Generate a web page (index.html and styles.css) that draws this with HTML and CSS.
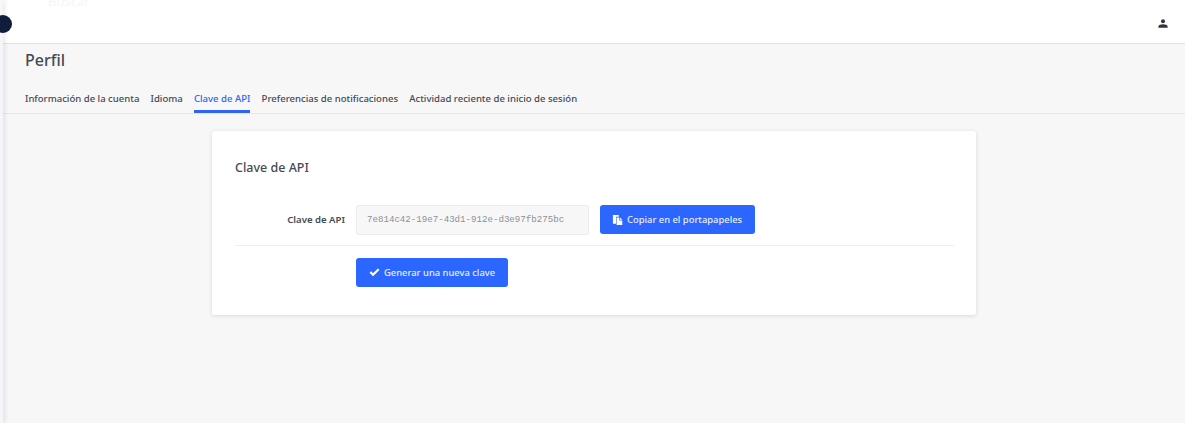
FILE: index.html
```html
<!DOCTYPE html>
<html lang="es">
<head>
<meta charset="utf-8">
<title>Perfil</title>
<link rel="stylesheet" href="styles.css">
</head>
<body>
<aside class="rail">
  <span class="rail-toggle"></span>
</aside>
<div class="main">
  <header class="topbar">
    <span class="search">Buscar</span>
    <svg class="user-icon" viewBox="0 0 10 9" width="10" height="9" aria-hidden="true"><circle cx="5" cy="2.3" r="2"/><path d="M0.4 8.8V7.4C0.4 6 2.8 5.3 5 5.3S9.6 6 9.6 7.4V8.8Z"/></svg>
  </header>
  <div class="page-head">
    <h1 class="page-title">Perfil</h1>
    <nav class="tabs">
      <a class="tab">Información de la cuenta</a>
      <a class="tab">Idioma</a>
      <a class="tab tab-active">Clave de API</a>
      <a class="tab">Preferencias de notificaciones</a>
      <a class="tab">Actividad reciente de inicio de sesión</a>
    </nav>
  </div>
  <section class="card">
    <h2 class="card-title">Clave de API</h2>
    <div class="form-row">
      <label class="form-label">Clave de API</label>
      <div class="key-input">7e814c42-19e7-43d1-912e-d3e97fb275bc</div>
      <button class="btn btn-copy">
        <svg class="btn-icon" viewBox="0 0 12 12" width="11" height="11" aria-hidden="true"><path d="M1 1H7.5V3H4.4V10.5H1Z"/><path d="M5 3.7H8V7H11.2V12H5Z"/><path d="M8.8 3.7L11.2 6.2H8.8Z"/></svg>
        Copiar en el portapapeles
      </button>
    </div>
    <div class="form-actions">
      <button class="btn">
        <svg class="btn-icon" viewBox="0 0 12 10" width="11" height="9" aria-hidden="true"><path d="M0.5 5.4L2.2 3.7L4.4 5.9L9.8 0.5L11.5 2.2L4.4 9.3Z"/></svg>
        Generar una nueva clave
      </button>
    </div>
  </section>
</div>
<div class="edge"></div>
</body>
</html>
```
FILE: styles.css
```css
* { box-sizing: border-box; }
html, body { margin: 0; height: 100%; }
body {
  display: flex;
  height: 423px;
  overflow: hidden;
  background: #f7f7f8;
  font-family: "Noto Sans", "Open Sans", sans-serif;
  color: #454a52;
}
.rail {
  position: relative;
  flex: 0 0 3px;
  background: #f6f6f9;
  box-shadow: 1px 0 5px rgba(50, 50, 100, 0.18);
  z-index: 2;
}
.rail-toggle {
  position: absolute;
  left: -6px;
  top: 15px;
  width: 18px;
  height: 18px;
  border-radius: 50%;
  background: #0f1c3a;
}
.main { flex: 1; min-width: 0; }
.edge { flex: 0 0 11px; background: #fff; }
.topbar {
  position: relative;
  height: 44px;
  display: flex;
  justify-content: flex-end;
  align-items: center;
  padding-right: 17px;
  background: #fff;
  border-bottom: 1px solid #e0e1e3;
}
.search {
  position: absolute;
  left: 45px;
  top: -8px;
  font-size: 13px;
  color: #f6f6f7;
}
.user-icon { fill: #2f343c; margin-top: 3px; }
.page-head {
  padding: 6px 0 0 22px;
  border-bottom: 1px solid #e6e8ec;
}
.page-title {
  margin: 0 0 21px;
  font-size: 16px;
  line-height: 20px;
  font-weight: 500;
  color: #454a52;
}
.tabs { display: flex; gap: 11.2px; }
.tab {
  display: block;
  height: 22px;
  padding-top: 1px;
  font-size: 9.55px;
  line-height: 13px;
  font-weight: 500;
  color: #454a52;
  border-bottom: 3px solid transparent;
}
.tab-active { color: #2d64f5; border-bottom-color: #2d64f5; }
.card {
  width: 764px;
  height: 184px;
  margin: 17px 0 0 209px;
  padding: 28px 22px 0 23px;
  background: #fff;
  border-radius: 3px;
  box-shadow: 0 1px 4px rgba(30, 40, 60, 0.14);
}
.card-title {
  margin: 0 0 28px;
  font-size: 12.5px;
  line-height: 18px;
  font-weight: 500;
  color: #454a52;
}
.form-row {
  display: flex;
  align-items: flex-start;
  height: 41px;
  padding-bottom: 10px;
  border-bottom: 1px solid #efeff1;
}
.form-label {
  width: 110px;
  text-align: right;
  font-size: 9.6px;
  line-height: 30px;
  font-weight: 600;
  color: #454a52;
}
.key-input {
  width: 233px;
  height: 30px;
  margin-left: 11px;
  padding-left: 10px;
  border: 1px solid #ececee;
  border-radius: 3px;
  background: #f7f7f8;
  font-family: "Liberation Mono", monospace;
  font-size: 9.15px;
  line-height: 28px;
  color: #8e9196;
}
.btn {
  display: inline-flex;
  align-items: center;
  gap: 4.5px;
  height: 29px;
  padding: 0 12.5px;
  border: 0;
  border-radius: 3px;
  background: #2a66ff;
  color: #e9efff;
  font-family: inherit;
  font-size: 9.4px;
  font-weight: 500;
}
.btn-copy { margin-left: 11px; gap: 4px; padding: 0 13px 0 12px; }
.btn-icon { fill: #fff; flex: none; }
.form-actions { padding: 12px 0 0 121px; }
```
